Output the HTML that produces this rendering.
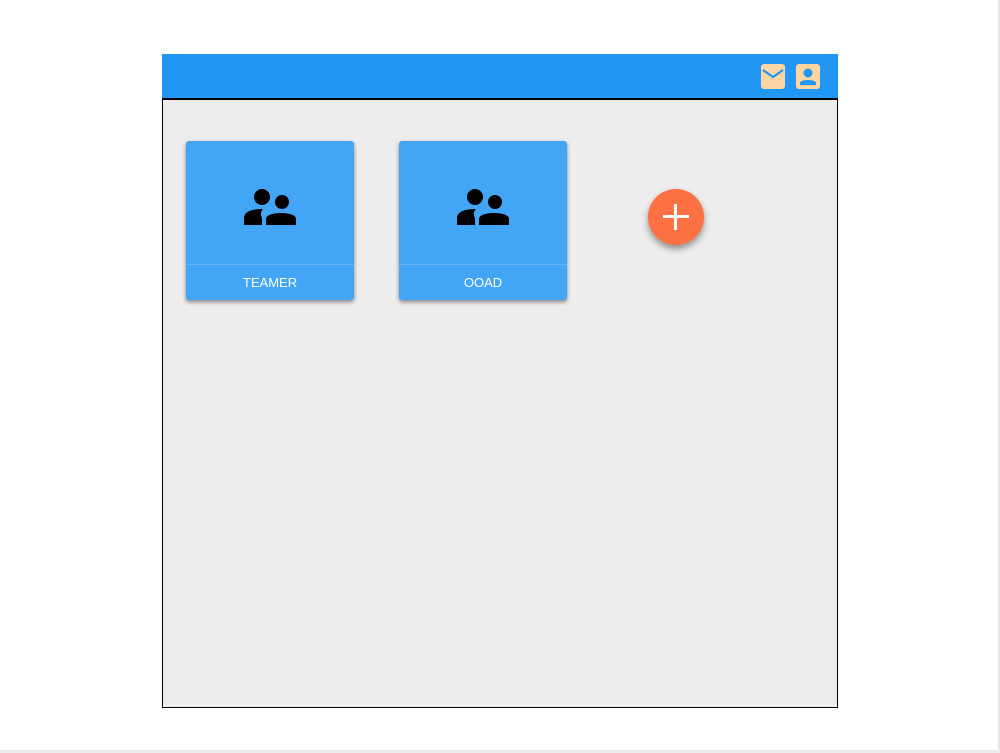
<!DOCTYPE html>
<html><head><style>
body{margin:0;width:1000px;height:753px;background:#fff;position:relative;overflow:hidden;font-family:"Liberation Sans",sans-serif}
.rb{position:absolute;left:998px;top:0;width:2px;height:753px;background:#e6e6e6}
.bb{position:absolute;left:0;top:750px;width:1000px;height:3px;background:#ececec}
.frame{position:absolute;left:162px;top:54px;width:674px;height:653px;border:1px solid #000;border-top:none;background:#ededed}
.hdr{position:absolute;left:162px;top:54px;width:676px;height:44px;background:#2196f3;border-bottom:2px solid #000}
.card{position:absolute;top:141px;width:168px;height:159px;background:#42a5f5;border-radius:3px;box-shadow:0 2px 4px rgba(0,0,0,.45)}
.card .div{position:absolute;left:0;right:0;top:123px;height:1px;background:#64b5f6}
.card .t{position:absolute;left:0;right:0;top:134px;text-align:center;color:#fff;font-size:13px}
.card svg{position:absolute;left:57px;top:47px}
.fab{position:absolute;left:648px;top:189px;width:56px;height:56px;border-radius:50%;background:#ff7043;box-shadow:0 4px 7px rgba(0,0,0,.4)}
.fab:before{content:"";position:absolute;left:15px;top:26px;width:26px;height:3px;background:#fff}
.fab:after{content:"";position:absolute;left:26px;top:15px;width:3px;height:26px;background:#fff}
</style></head><body>
<div class="rb"></div><div class="bb"></div>
<div class="frame"></div>
<div class="hdr">
<svg style="position:absolute;left:599px;top:10px" width="24" height="25" viewBox="0 0 24 25"><rect width="24" height="25" rx="3" fill="#ffd5a3"/><path d="M2 6 L12 13 L22 6" stroke="#2196f3" stroke-width="2.2" fill="none"/></svg>
<svg style="position:absolute;left:634px;top:10px" width="24" height="25" viewBox="0 0 24 25"><rect width="24" height="25" rx="3" fill="#ffd5a3"/><circle cx="12" cy="9" r="4.5" fill="#2196f3"/><path d="M4 21 V19 C4 15 20 15 20 19 V21 Z" fill="#2196f3"/></svg>
</div>
<div class="card" style="left:186px">
<svg width="54" height="40" viewBox="0 0 54 40"><circle cx="19" cy="9" r="8" fill="#000"/><circle cx="39" cy="14" r="7" fill="#000"/><path d="M1 37 V30 C1 24 8 21 20 21 C16 25 19 29 19 31 L19 37 Z" fill="#000"/><path d="M23 37 V31 C23 27 30 25 38 25 C46 25 53 27 53 31 V37 Z" fill="#000"/></svg>
<div class="div"></div><div class="t">TEAMER</div></div>
<div class="card" style="left:399px">
<svg width="54" height="40" viewBox="0 0 54 40"><circle cx="19" cy="9" r="8" fill="#000"/><circle cx="39" cy="14" r="7" fill="#000"/><path d="M1 37 V30 C1 24 8 21 20 21 C16 25 19 29 19 31 L19 37 Z" fill="#000"/><path d="M23 37 V31 C23 27 30 25 38 25 C46 25 53 27 53 31 V37 Z" fill="#000"/></svg>
<div class="div"></div><div class="t">OOAD</div></div>
<div class="fab"></div>
</body></html>
